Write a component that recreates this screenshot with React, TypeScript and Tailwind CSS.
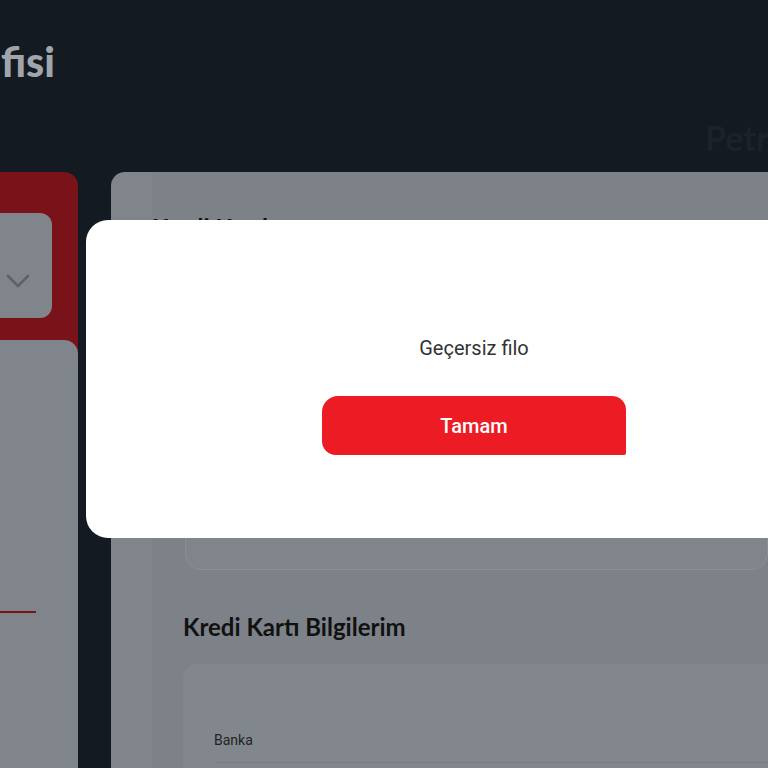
import React from "react";

// arka plan sayfası + "Geçersiz filo" uyarı penceresi

const Chevron: React.FC = () => (
  <svg width="24" height="14" viewBox="0 0 24 14" fill="none">
    <path d="M2 2 L12 12 L22 2" stroke="#5d6269" strokeWidth="2.6" strokeLinecap="round" strokeLinejoin="round" />
  </svg>
);

const App: React.FC = () => {
  return (
    <div className="relative w-[768px] h-[768px] overflow-hidden bg-[#131a22] font-['Roboto',sans-serif]">
      {/* header */}
      <div className="relative h-[172px]">
        <div className="pt-[36px] pl-[1px] text-[41px] leading-[52px] font-black text-[#a1a5ab] font-['Lato','Noto_Sans',sans-serif]">
          fisi
        </div>
        <div className="absolute left-[705px] top-[112px] w-[63px] overflow-hidden text-[34px] font-bold text-[#1b222a] font-['Lato',sans-serif] whitespace-nowrap">
          Petr
        </div>
      </div>

      {/* content */}
      <div className="flex h-[596px]">
        <div className="w-[78px] flex flex-col bg-[#7a1219] rounded-tr-[14px]">
          <div className="mt-[41px] w-[52px] h-[105px] bg-[#80858c] rounded-r-[12px] flex items-end pl-[6px] pb-[30px]">
            <Chevron />
          </div>
          <div className="mt-[22px] flex-1 bg-[#80858c] rounded-tr-[14px]">
            <div className="mt-[271px] w-[36px] h-[2px] bg-[#7a1219]" />
          </div>
        </div>

        <div className="ml-[33px] flex-1 bg-[#80858c] rounded-tl-[14px] pl-[41px]">
          <div className="h-full bg-[#7d8289] pt-[41px] font-['Lato','Noto_Sans',sans-serif]">
            <div className="text-[24px] leading-[30px] font-bold text-[#111]">Kredi Kartlarım</div>
            <div className="mt-[7px] ml-[33px] h-[320px] rounded-[16px] border border-[#8a8f96] bg-[#80858c]" />
            <div className="mt-[42px] ml-[31px] text-[24px] leading-[30px] font-bold text-[#111]">
              Kredi Kartı Bilgilerim
            </div>
            <div className="mt-[22px] ml-[31px] h-[200px] rounded-tl-[14px] bg-[#82878e] pt-[66px] pl-[31px]">
              <div className="text-[14px] leading-[20px] text-[#222] font-['Roboto',sans-serif]">Banka</div>
              <div className="mt-[12px] h-[1px] bg-[#797e85]" />
            </div>
          </div>
        </div>
      </div>

      {/* modal */}
      <div className="absolute left-[86px] top-[220px] w-[776px] h-[318px] bg-white rounded-[22px] flex flex-col items-center pt-[116px]">
        <div className="text-[20px] leading-[24px] text-[#333]">Geçersiz filo</div>
        <button className="mt-[36px] w-[304px] h-[59px] bg-[#ed1c24] text-white text-[20px] font-medium rounded-tl-[16px] rounded-tr-[14px] rounded-bl-[14px] rounded-br-[2px]">
          Tamam
        </button>
      </div>
    </div>
  );
};

export default App;
